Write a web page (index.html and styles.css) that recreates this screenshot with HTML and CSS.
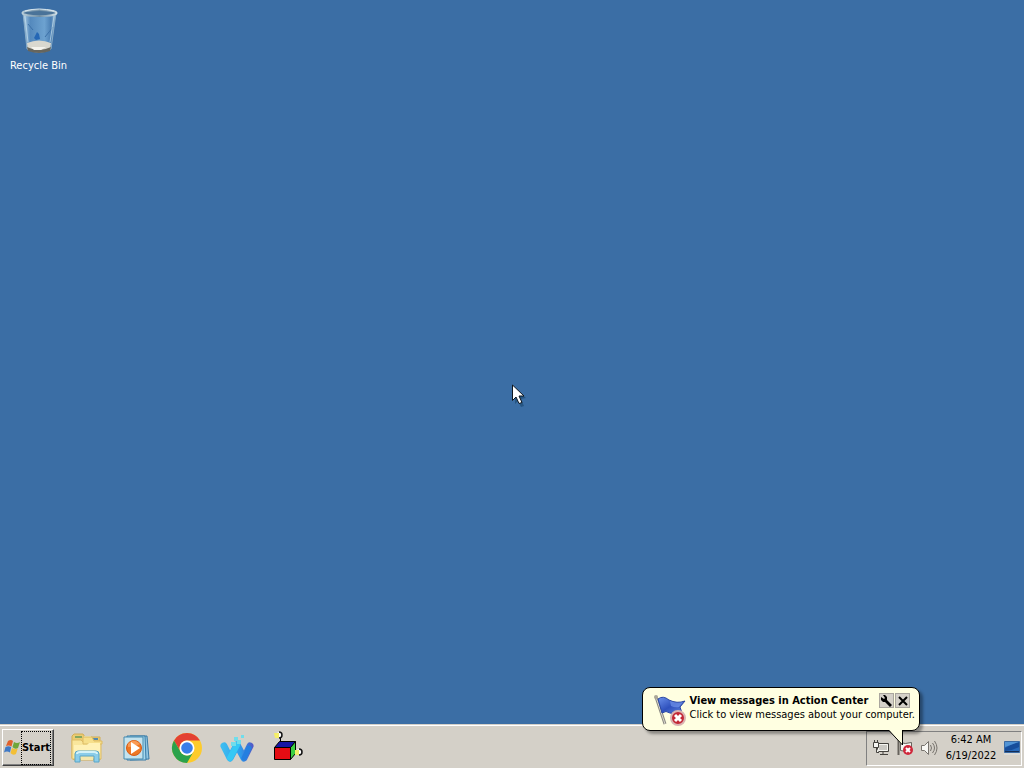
FILE: index.html
```html
<!DOCTYPE html>
<html lang="en">
<head>
<meta charset="utf-8">
<title>Desktop</title>
<link rel="stylesheet" href="styles.css">
</head>
<body>
<main class="desktop">
  <a class="shortcut" href="#recycle">
    <svg width="40" height="48" viewBox="0 0 40 48" aria-hidden="true">
      <defs>
        <linearGradient id="glass" x1="0" x2="1"><stop offset="0" stop-color="#b5d3e8"/><stop offset=".22" stop-color="#5489bd"/><stop offset=".65" stop-color="#6da2d0"/><stop offset=".85" stop-color="#4b7fb4"/><stop offset="1" stop-color="#a9c8de"/></linearGradient>
        <linearGradient id="rim" x1="0" x2="1"><stop offset="0" stop-color="#b9cdd8"/><stop offset=".5" stop-color="#6e8da4"/><stop offset="1" stop-color="#d2e0e6"/></linearGradient>
      </defs>
      <path d="M4 6 8 42Q20 48 32 42L37 6Z" fill="url(#glass)" stroke="#87abc7"/>
      <path d="M8 36Q20 31 32 36L31 43Q20 48 9 43Z" fill="#d9d8cf"/>
      <path d="M8 40Q20 46 32 40L31 44Q20 48 9 44Z" fill="#66655d"/>
      <path d="m12 40 3 3h7l5-3Z" fill="#f4f3ed"/>
      <path d="m15 31 3-6 2 2 1 5-4 1Z" fill="#2567b5"/>
      <path d="m26 30 8-10M9 17l5 6" fill="none" stroke="#3c71a8"/>
      <path d="m6 9 3 26M35 9l-4 26" stroke="#c6dfed" stroke-opacity=".7"/>
      <ellipse cx="20.500" cy="6" rx="17" ry="3" fill="#4a7399" stroke="url(#rim)" stroke-width="2"/>
      <path d="M6 4Q20 0 35 4" fill="none" stroke="#d9e7ef"/>
    </svg>
    <span>Recycle Bin</span>
  </a>
</main>

<svg class="cursor" width="16" height="24" viewBox="0 0 16 24" aria-hidden="true">
  <path d="m3 4 11 10-5 1 3 7-3 1-3-6-3 3Z" fill="#17456a" opacity=".6"/>
  <path d="M.5 1v15.500L4 13l3 6.500 3-1L7 12h5Z" fill="#fff" stroke="#101820"/>
</svg>

<footer class="taskbar">
  <button class="start" type="button">
    <svg width="17" height="17" viewBox="0 0 17 17" aria-hidden="true">
      <path d="M4 2q3-2 5 0L7.500 7.500Q5 6 2 7Z" fill="#e0602c"/>
      <path d="M10 3q3 2 6 0l-2 6q-3 2-5.500-1Z" fill="#6fa63a"/>
      <path d="M1.500 8q3-1.500 5.700 0L6 13.500q-3-2-6 0Z" fill="#3f79c6"/>
      <path d="M8 9q3 2 5.700.5L12 15q-3 2-5.500-1Z" fill="#f3bf35"/>
    </svg>
    <span class="start-label">Start</span>
  </button>
  <nav class="pinned" aria-label="Pinned programs">
    <button type="button" aria-label="File Explorer">
      <svg width="34" height="34" viewBox="0 0 34 34">
        <path d="M2 27V5l2-2h9l2 3h15v23H4Z" fill="#ebcc72" stroke="#d2ad54"/>
        <path d="M5 5h7v2H5Z" fill="#83a760"/><path d="M14 5h7v2h-7Z" fill="#e8efce"/><path d="M21 8h7" stroke="#548ab0" stroke-width="2"/>
        <path d="M2 9h9l2 2h18v17H2Z" fill="#f9e69c" stroke="#ddbb64"/>
        <path d="M13 6h9l2 4h8v3H13Z" fill="#f6df8b" stroke="#ddbb64"/>
        <path d="M4 14h13l2-2h11v10H4Z" fill="#fff1b6"/>
        <path d="M5 31V23q0-3 3-3h18q3 0 3 3v8h-5v-6H10v6Z" fill="#8bcde9" stroke="#58a5c8"/>
        <path d="M7 23q0-2 3-2h14q3 0 3 2" fill="none" stroke="#d4f2f7" stroke-width="2"/>
        <path d="M11 26h12v3H11Z" fill="#f4e7ad"/>
      </svg>
    </button>
    <button type="button" aria-label="Media Player">
      <svg width="34" height="34" viewBox="0 0 34 34">
        <path d="M10 5h17l2 23-19 1Z" fill="#8fc5e2" stroke="#397ba6"/>
        <path d="M7 5h18l1 24H7Z" fill="#a7d8ed" stroke="#397ba6"/>
        <path d="M4 6h19v22H4Z" fill="#c4e3ee" stroke="#458bb1"/>
        <circle cx="14" cy="17" r="7.500" fill="#ee7825" stroke="#d75b16"/>
        <path d="M8 13q6-7 12 0-5 3-12 3Z" fill="#f99b55"/>
        <path d="m11 11 9 6-9 6Z" fill="#fff"/>
      </svg>
    </button>
    <button type="button" aria-label="Chrome">
      <svg width="34" height="34" viewBox="0 0 34 34">
        <circle cx="17" cy="17" r="15" fill="#fdcb2c"/>
        <path d="M4 9.500A15 15 0 0 1 30 9.500H17a7.500 7.500 0 0 0-6.500 11.300Z" fill="#e34133"/>
        <path d="M4 9.500 10.500 20.800A7.500 7.500 0 0 0 23.500 20.800L17 32A15 15 0 0 1 4 9.500Z" fill="#2ba24c"/>
        <circle cx="17" cy="17" r="7.500" fill="#fff"/><circle cx="17" cy="17" r="5.800" fill="#397ee8"/>
      </svg>
    </button>
    <button type="button" aria-label="Waterfox">
      <svg width="34" height="34" viewBox="0 0 34 34">
        <defs><linearGradient id="wave" gradientUnits="userSpaceOnUse" x1="2" x2="33" y1="12" y2="12"><stop stop-color="#3dbdf0"/><stop offset=".6" stop-color="#2d9aea"/><stop offset="1" stop-color="#5358c6"/></linearGradient></defs>
        <path d="m4 15 6 12 7-13 7 13 6-12" fill="none" stroke="url(#wave)" stroke-width="7" stroke-linejoin="round" stroke-linecap="round"/>
        <path d="m10 27 7-13" stroke="#35c8f5" stroke-width="6" stroke-linecap="round"/>
        <path d="m24 27 5-10" stroke="#247fe0" stroke-width="5" stroke-linecap="round"/>
        <path d="M11 11h5v4h-5ZM14 6h4v4h-4ZM17 9h4v4h-4ZM21 4h3v3h-3Z" fill="#70ddeb"/>
      </svg>
    </button>
    <button type="button" aria-label="Cube tool">
      <svg width="34" height="34" viewBox="0 0 34 34">
        <path d="M10.500 6v5M25 21h4" stroke="#000" stroke-width="1"/>
        <path d="m4.500 16.500 5-6h16l-4.500 6Z" fill="#1515a5" stroke="#000"/>
        <path d="m20.500 16.500 5-6v12l-5 6Z" fill="#3bcf43" stroke="#000"/>
        <path d="M4.500 16.500h16v12h-16Z" fill="#e40c13" stroke="#000"/>
        <circle cx="9.500" cy="4" r="3" fill="#fff"/><path d="M9 1a3 3 0 1 1 0 6" fill="none" stroke="#111" stroke-width="1.500"/><path d="M4 2h5v5H5Z" fill="#f5ee67"/>
        <circle cx="29" cy="21" r="3" fill="#fff"/><path d="M29 18a3 3 0 1 1 0 6" fill="none" stroke="#111" stroke-width="1.500"/><path d="M25 19h4v5h-4Z" fill="#eff06a"/>
      </svg>
    </button>
  </nav>
  <section class="tray" aria-label="Notification area">
    <button type="button" aria-label="Network">
      <svg width="18" height="18" viewBox="0 0 18 18">
        <path d="M5.500 4.500h11v8h-11Z" fill="#cbc9c3" stroke="#45433e"/><path d="M6.500 5.500h9v6h-9Z" fill="none" stroke="#f5f5f0"/>
        <path d="M8 15.500h8M11 13v2" stroke="#45433e"/>
        <path d="M2.500 1v2M5.500 1v2M1.500 3.500h5v5h-5ZM4.500 9v4.500H7" fill="#f6f6f2" stroke="#45433e"/>
      </svg>
    </button>
    <button type="button" aria-label="Action Center">
      <svg width="18" height="18" viewBox="0 0 18 18">
        <path d="M2.500 1v15" stroke="#66625c" stroke-width="2"/><path d="M4.500 3.500q4 2 11 0v8q-5 2-11 0Z" fill="#f5f5f1" stroke="#66625c"/>
        <circle cx="12" cy="11" r="5" fill="#cf283b"/><path d="m10 9 4 4m0-4-4 4" stroke="#fff" stroke-width="2"/>
      </svg>
    </button>
    <button type="button" aria-label="Volume">
      <svg width="18" height="18" viewBox="0 0 18 18">
        <path d="M1.500 6.500h3l4-4v13l-4-4h-3Z" fill="#f8f8f4" stroke="#77736d"/><path d="M10.500 6q2 3 0 6M12.500 4q4 5 0 10M14.500 2q5 7 0 14" fill="none" stroke="#77736d"/>
      </svg>
    </button>
    <button class="clock" type="button"><time datetime="2022-06-19T06:42">6:42 AM<br>6/19/2022</time></button>
    <button type="button" aria-label="Show desktop">
      <svg width="16" height="14" viewBox="0 0 16 14">
        <path d="M.5.500h15v11H.5Z" fill="#286abb" stroke="#3b6aa3"/><path d="M1 7Q8 2 15 1v5Q8 10 1 10Z" fill="#174d9b"/><path d="M1 1h14L1 6Z" fill="#5294d5"/><path d="M1 10.500h14" stroke="#152e56"/><path d="M0 13h16" stroke="#e1e5e6"/>
      </svg>
    </button>
  </section>
</footer>

<aside class="balloon" aria-label="Action Center notification">
  <svg class="flag" width="34" height="34" viewBox="0 0 34 34" aria-hidden="true">
    <defs><linearGradient id="flag-blue" x1="0" y1="0" x2="1" y2="1"><stop stop-color="#6b91eb"/><stop offset=".5" stop-color="#2f51bd"/><stop offset="1" stop-color="#6489de"/></linearGradient></defs>
    <path d="m3 4 9 27" stroke="#8d8b84" stroke-width="3"/><path d="m3 4 9 27" stroke="#d8d6ca"/><circle cx="3" cy="4" r="2" fill="#aaa798"/>
    <path d="M5 6q5-4 11 1 8 4 16 1l-5 6 2 6q-7 2-12 0-4-3-8 0Z" fill="url(#flag-blue)" stroke="#2946a3"/>
    <path d="M17 8q7 3 13 1l-4 5q-4 1-8-1Z" fill="#799df0" opacity=".6"/>
    <circle cx="25" cy="25" r="7" fill="#c32735" stroke="#d9b3b2" stroke-width="2"/><path d="m22 22 6 6m0-6-6 6" stroke="#fff" stroke-width="3"/>
  </svg>
  <div class="message">
    <div class="heading">
      <strong>View messages in Action Center</strong>
      <div class="tools">
        <button type="button" aria-label="Customize"><svg width="12" height="12" viewBox="0 0 12 12"><path d="M2 0 4 3 3 4 0 2v3l2 2h2l5 5 2-2-5-5V2L4 0Z" fill="#000"/></svg></button>
        <button type="button" aria-label="Close"><svg width="12" height="12" viewBox="0 0 12 12"><path d="m2 2 8 8m0-8-8 8" stroke="#000" stroke-width="2"/></svg></button>
      </div>
    </div>
    <p>Click to view messages about your computer.</p>
  </div>
  <svg class="tail" width="18" height="17" viewBox="0 0 18 17" aria-hidden="true"><path d="M2 0 15 15V0Z" fill="#ffffe1"/><path d="M1 .5h1L15.500 15V.5h1" fill="none" stroke="#000"/></svg>
</aside>
</body>
</html>
```
FILE: styles.css
```css
* { box-sizing: border-box; }
body {
  position: relative;
  display: flex;
  flex-direction: column;
  min-height: 100vh;
  margin: 0;
  background: #3b6ea5;
  color: #000;
  font: 11px/14px "DejaVu Sans Condensed", "Noto Sans", sans-serif;
}
button {
  display: flex;
  align-items: center;
  justify-content: center;
  padding: 0;
  border: 0;
  background: none;
  color: inherit;
  font: inherit;
}
svg { display: block; flex: none; }
.desktop { flex: 1; padding: 7px 1px; }
.shortcut {
  display: flex;
  flex-direction: column;
  align-items: center;
  gap: 4px;
  width: 75px;
  color: #fff;
  text-decoration: none;
}
.cursor { position: absolute; top: 50%; left: 50%; }
.taskbar {
  display: flex;
  align-items: stretch;
  height: 44px;
  padding: 4px 2px 2px;
  border-top: 1px solid #d4d0c8;
  background: #d4d0c8;
  box-shadow: inset 0 1px #fff;
}
.start {
  width: 52px;
  padding-right: 1px;
  border: 1px solid;
  border-color: #fff #404040 #404040 #fff;
  box-shadow: inset -1px -1px #808080;
  font-weight: bold;
}
.start-label {
  display: flex;
  align-items: center;
  height: 34px;
  border: 1px dotted #000;
}
.pinned { display: flex; gap: 16px; margin-left: 16px; }
.pinned button { width: 34px; }
.tray {
  display: flex;
  align-items: center;
  gap: 6px;
  margin: 2px 0 0 auto;
  padding: 0 1px 2px 5px;
  border: 1px solid;
  border-color: #808080 #fff #fff #808080;
}
.clock { width: 54px; line-height: 16px; text-align: center; }
.balloon {
  position: absolute;
  right: 104px;
  bottom: 37px;
  display: flex;
  gap: 3px;
  padding: 5px 4px 3px 10px;
  border: 1px solid #000;
  border-radius: 8px;
  background: #ffffe1;
  box-shadow: 3px 3px 3px rgb(0 0 0 / 35%);
}
.heading {
  display: flex;
  align-items: center;
  justify-content: space-between;
  gap: 8px;
  padding-right: 5px;
}
.tools { display: flex; gap: 1px; }
.tools button {
  width: 15px;
  height: 15px;
  border: 1px solid #aaa69e;
  background: #d4d0c8;
}
.message p { margin: 0; }
.tail { position: absolute; top: 100%; right: 14px; }
```
